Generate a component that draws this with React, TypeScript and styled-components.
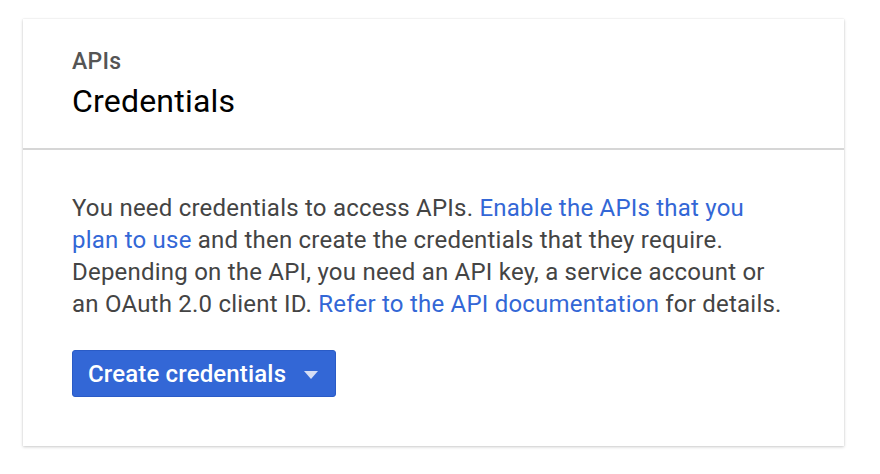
import React from "react";
import styled, { createGlobalStyle } from "styled-components";

const Global = createGlobalStyle`
  html, body { margin: 0; padding: 0; background: #ffffff; }
  body { font-family: Roboto, "Noto Sans", Arial, sans-serif; -webkit-font-smoothing: antialiased; }
`;

const Page = styled.div`
  padding: 19px 36px 28px 23px;
`;

const Card = styled.section`
  width: 821px;
  background: #fff;
  box-shadow: 0 1px 3px rgba(0, 0, 0, 0.2), 0 0 1px rgba(0, 0, 0, 0.12);
`;

const Header = styled.header`
  padding: 29px 49px 28px;
  border-bottom: 2px solid #d6d6d6;
`;

const Eyebrow = styled.div`
  font-size: 23px;
  font-weight: 500;
  color: #555;
  line-height: 28px;
  letter-spacing: 0.3px;
`;

const Title = styled.h1`
  margin: 6px 0 0;
  font-size: 32px;
  font-weight: 400;
  color: #000;
  line-height: 38px;
  letter-spacing: 0.2px;
`;

const Body = styled.div`
  padding: 42px 49px 49px;
`;

const Text = styled.p`
  margin: 0;
  font-size: 24px;
  line-height: 32px;
  color: #444;
  max-width: 712px;
  letter-spacing: 0.22px;
`;

const Link = styled.a`
  color: #3367d6;
  text-decoration: none;
`;

const Button = styled.button`
  margin-top: 30px;
  display: inline-flex;
  align-items: center;
  gap: 18px;
  height: 47px;
  padding: 0 17px 0 15px;
  background: #3367d6;
  border: 1px solid #2a5bc6;
  border-radius: 3px;
  color: #fff;
  font-family: Roboto, Arial, sans-serif;
  font-size: 24px;
  font-weight: 500;
  letter-spacing: 0.15px;
  cursor: pointer;
`;

const Caret = styled.span`
  width: 0;
  height: 0;
  margin-top: 2px;
  border-left: 7px solid transparent;
  border-right: 7px solid transparent;
  border-top: 8px solid #d6def5;
`;

export default function App() {
  return (
    <Page>
      <Global />
      <Card>
        <Header>
          <Eyebrow>APIs</Eyebrow>
          <Title>Credentials</Title>
        </Header>
        <Body>
          <Text>
            You need credentials to access APIs.{" "}
            <Link href="#">Enable the APIs that you plan to use</Link> and then create the
            credentials that they require. Depending on the API, you need an API key, a
            service account or an OAuth 2.0 client ID.{" "}
            <Link href="#">Refer to the API documentation</Link> for details.
          </Text>
          <Button>
            Create credentials
            <Caret />
          </Button>
        </Body>
      </Card>
    </Page>
  );
}
